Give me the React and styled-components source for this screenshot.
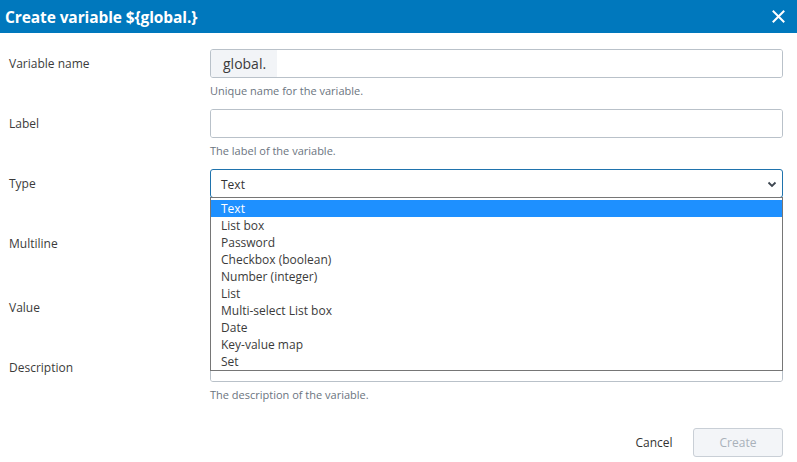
import React from 'react';
import styled, { createGlobalStyle } from 'styled-components';

const Global = createGlobalStyle`
  html, body {
    margin: 0;
    padding: 0;
    background: #fff;
    font-family: 'Open Sans', 'Noto Sans', sans-serif;
    color: #333;
  }
  * { box-sizing: border-box; }
`;

const Dialog = styled.div`
  width: 797px;
  height: 462px;
  display: flex;
  flex-direction: column;
  overflow: hidden;
`;

const Header = styled.div`
  height: 33px;
  background: #0078bd;
  display: flex;
  align-items: center;
  justify-content: space-between;
  padding: 0 12px 0 5px;
`;

const Title = styled.h1`
  margin: 0;
  font-size: 15.5px;
  font-weight: 700;
  color: #fff;
  letter-spacing: -0.1px;
`;

const Close = styled.button`
  border: 0;
  background: none;
  padding: 0;
  width: 13px;
  height: 13px;
  display: flex;
  cursor: pointer;
`;

const Body = styled.div`
  padding: 16px 14px 0 9px;
  display: flex;
  flex-direction: column;
`;

const Field = styled.div`
  display: grid;
  grid-template-columns: 201px 1fr;
  height: ${p => p.h || 60}px;
`;

const Label = styled.label`
  font-size: 12px;
  line-height: 29px;
  color: #3b3b3b;
`;

const Control = styled.div`
  display: flex;
  flex-direction: column;
  position: relative;
`;

const InputBox = styled.div`
  height: 29px;
  border: 1px solid ${p => (p.focus ? '#1f73ad' : '#b9c1c9')};
  border-radius: 3px;
  display: flex;
  align-items: stretch;
  overflow: hidden;
  background: #fff;
`;

const Prefix = styled.span`
  background: #f2f4f7;
  padding: 0 12px;
  font-size: 14px;
  color: #3b3b3b;
  display: flex;
  align-items: center;
  width: 66px;
`;

const Input = styled.input`
  flex: 1;
  border: 0;
  outline: none;
  font: inherit;
  font-size: 12px;
  padding: 0 10px;
`;

const SelectBox = styled(InputBox)`
  justify-content: space-between;
  align-items: center;
  padding: 1px 4px 0 10px;
  font-size: 12px;
  color: #333;
`;

const Help = styled.div`
  margin-top: 6px;
  font-size: 11px;
  line-height: 14px;
  color: #6b7480;
`;

const Menu = styled.ul`
  position: absolute;
  top: 28px;
  left: 0;
  right: 0;
  margin: 0;
  padding: 2px 0 0;
  list-style: none;
  background: #fff;
  border: 1px solid #767676;
  z-index: 5;
`;

const Option = styled.li`
  height: 17px;
  line-height: 17px;
  padding-left: 10px;
  font-size: 12px;
  background: ${p => (p.active ? '#1e90ff' : '#fff')};
  color: ${p => (p.active ? '#fff' : '#3b3b3b')};
`;

const Footer = styled.div`
  margin-top: auto;
  padding: 0 14px 5px 0;
  display: flex;
  justify-content: flex-end;
  align-items: center;
  gap: 10px;
`;

const Button = styled.button`
  height: 29px;
  font-family: inherit;
  font-size: 12px;
  border-radius: 3px;
  border: 1px solid ${p => (p.primary ? '#c9cfd6' : 'transparent')};
  background: ${p => (p.primary ? '#f3f5f8' : 'transparent')};
  color: ${p => (p.primary ? '#a9b1ba' : '#333')};
  width: ${p => (p.primary ? '90px' : '58px')};
`;

const options = [
  'Text',
  'List box',
  'Password',
  'Checkbox (boolean)',
  'Number (integer)',
  'List',
  'Multi-select List box',
  'Date',
  'Key-value map',
  'Set',
];

export default function App() {
  return (
    <Dialog>
      <Global />
      <Header>
        <Title>{'Create variable ${global.}'}</Title>
        <Close aria-label="Close">
          <svg width="13" height="13" viewBox="0 0 13 13">
            <path d="M1.5 1.5 L11.5 11.5 M11.5 1.5 L1.5 11.5" stroke="#fff" strokeWidth="2" strokeLinecap="square" />
          </svg>
        </Close>
      </Header>
      <Body>
        <Field>
          <Label>Variable name</Label>
          <Control>
            <InputBox>
              <Prefix>global.</Prefix>
              <Input />
            </InputBox>
            <Help>Unique name for the variable.</Help>
          </Control>
        </Field>
        <Field>
          <Label>Label</Label>
          <Control>
            <InputBox>
              <Input />
            </InputBox>
            <Help>The label of the variable.</Help>
          </Control>
        </Field>
        <Field>
          <Label>Type</Label>
          <Control>
            <SelectBox focus>
              <span>Text</span>
              <svg width="12" height="12" viewBox="0 0 12 12">
                <path d="M2.5 4.5 L6 8 L9.5 4.5" stroke="#3d4650" strokeWidth="1.8" fill="none" />
              </svg>
            </SelectBox>
            <Menu>
              {options.map((o, i) => (
                <Option key={o} active={i === 0}>{o}</Option>
              ))}
            </Menu>
          </Control>
        </Field>
        <Field h={64}>
          <Label>Multiline</Label>
          <Control />
        </Field>
        <Field>
          <Label>Value</Label>
          <Control>
            <InputBox>
              <Input />
            </InputBox>
          </Control>
        </Field>
        <Field>
          <Label>Description</Label>
          <Control>
            <InputBox>
              <Input />
            </InputBox>
            <Help>The description of the variable.</Help>
          </Control>
        </Field>
      </Body>
      <Footer>
        <Button>Cancel</Button>
        <Button primary disabled>Create</Button>
      </Footer>
    </Dialog>
  );
}
